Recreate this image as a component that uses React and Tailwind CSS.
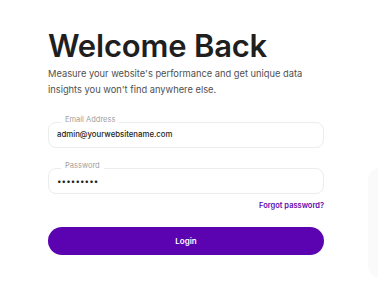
export default function App() {
  return (
    <div
      className="flex h-[287px] w-[378px] overflow-hidden bg-white"
      style={{ fontFamily: "Inter, 'Noto Sans', sans-serif" }}
    >
      <div className="w-[276px] shrink-0 ml-[48px] pt-[28px]">
        <h1 className="text-[31px] leading-[36px] font-semibold tracking-[-0.2px] text-[#1f1f1f]">
          Welcome Back
        </h1>
        <p className="mt-[2px] text-[9.3px] leading-[16px] text-[#505050]">
          Measure your website's performance and get unique data insights you
          won't find anywhere else.
        </p>

        <form className="mt-[24px]">
          <div className="relative flex h-[26px] items-center rounded-[8px] border border-[#ececec] px-[8px]">
            <span className="absolute -top-[8px] left-[12px] bg-white px-[4px] text-[7.5px] leading-[10px] text-[#a0a0a0]">
              Email Address
            </span>
            <span className="text-[7.8px] font-medium text-[#1e1e1e]">
              admin@yourwebsitename.com
            </span>
          </div>

          <div className="relative mt-[20px] flex h-[26px] items-center rounded-[8px] border border-[#ececec] px-[8px]">
            <span className="absolute -top-[8px] left-[12px] bg-white px-[4px] text-[7.5px] leading-[10px] text-[#a0a0a0]">
              Password
            </span>
            <span className="text-[8px] tracking-[0.1px] text-[#1e1e1e]">
              •••••••••
            </span>
          </div>

          <div className="mt-[2px] text-right leading-[12px]">
            <a className="text-[7.5px] font-semibold text-[#5a0ab0]">
              Forgot password?
            </a>
          </div>

          <button
            type="button"
            className="mt-[15px] flex h-[28px] w-full items-center justify-center rounded-full bg-[#5b03b0] text-[8px] font-semibold text-white"
          >
            Login
          </button>
        </form>
      </div>

      <div className="ml-[44px] mt-[168px] h-[110px] w-[40px] shrink-0 rounded-[12px] bg-[#fafafa]" />
    </div>
  );
}
